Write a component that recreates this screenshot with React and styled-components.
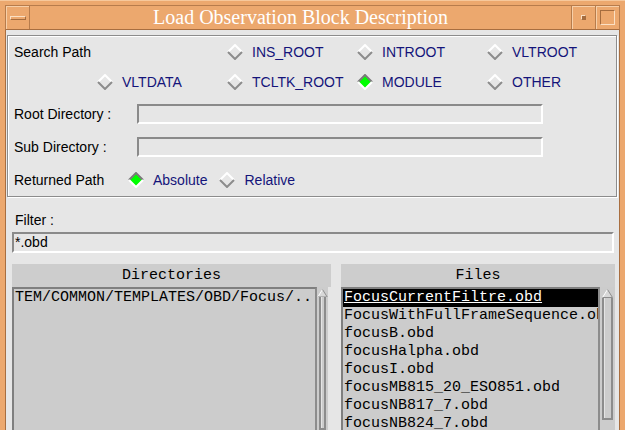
import React from 'react';
import styled, { createGlobalStyle } from 'styled-components';

const GlobalStyle = createGlobalStyle`
  html, body {
    margin: 0;
    padding: 0;
    background: #eca86e;
  }
  body {
    font-family: "Liberation Sans", Arial, sans-serif;
  }
`;

const searchRow1 = ['INS_ROOT', 'INTROOT', 'VLTROOT'];
const searchRow2 = ['VLTDATA', 'TCLTK_ROOT', 'MODULE', 'OTHER'];

const files = [
  'FocusCurrentFiltre.obd',
  'FocusWithFullFrameSequence.obd',
  'focusB.obd',
  'focusHalpha.obd',
  'focusI.obd',
  'focusMB815_20_ESO851.obd',
  'focusNB817_7.obd',
  'focusNB824_7.obd',
  'focusR.obd',
];

const Diamond = ({ checked }) => (
  <svg width="16" height="16" viewBox="0 0 16 16">
    {checked && <polygon points="8,1.5 14.5,8 8,14.5 1.5,8" fill="#00ff00" />}
    <polyline
      points="1,8 8,1 15,8"
      fill="none"
      stroke={checked ? '#7a7a7a' : '#ffffff'}
      strokeWidth="2"
    />
    <polyline
      points="1,8 8,15 15,8"
      fill="none"
      stroke={checked ? '#ffffff' : '#8c8c8c'}
      strokeWidth="2"
    />
  </svg>
);

const Radio = ({ label, checked }) => (
  <RadioItem>
    <Diamond checked={checked} />
    <span>{label}</span>
  </RadioItem>
);

const ScrollBar = ({ width, sliderEnd }) => (
  <Trough $width={width}>
    <svg width="11" height="9" viewBox="0 0 11 9">
      <polygon points="5.5,0.5 10.5,8.5 0.5,8.5" fill="#d8d8d8" />
      <polyline points="0.5,8.5 5.5,0.5" stroke="#ffffff" fill="none" />
      <polyline points="5.5,0.5 10.5,8.5 0.5,8.5" stroke="#8c8c8c" fill="none" />
    </svg>
    <Slider $end={sliderEnd} />
  </Trough>
);

const App = () => {
  return (
    <>
      <GlobalStyle />
      <Frame>
        <TitleBar>
          <TitleButton $w={23}>
            <MinGlyph />
          </TitleButton>
          <Title>Load Observation Block Description</Title>
          <TitleButton $w={23} $sep>
            <DotGlyph />
          </TitleButton>
          <TitleButton $w={23} $sep>
            <MaxGlyph />
          </TitleButton>
        </TitleBar>
        <Content>
          <GroupBox>
            <SearchGrid>
              <GridLabel>Search Path</GridLabel>
              {searchRow1.map((s) => (
                <Radio key={s} label={s} />
              ))}
              {searchRow2.map((s) => (
                <Radio key={s} label={s} checked={s === 'MODULE'} />
              ))}
            </SearchGrid>
            <FieldRow $h={33}>
              <FieldLabel $w={123}>Root Directory :</FieldLabel>
              <Entry $w={406} $h={20} />
            </FieldRow>
            <FieldRow $h={34}>
              <FieldLabel $w={123}>Sub Directory :</FieldLabel>
              <Entry $w={406} $h={20} />
            </FieldRow>
            <FieldRow $h={32}>
              <FieldLabel $w={114}>Returned Path</FieldLabel>
              <Radio label="Absolute" checked />
              <RadioGap />
              <Radio label="Relative" />
            </FieldRow>
          </GroupBox>

          <FilterLabel>Filter :</FilterLabel>
          <FilterEntry $h={21}>*.obd</FilterEntry>

          <Panels>
            <Panel $w={319}>
              <PanelHeader>Directories</PanelHeader>
              <PanelBody $gap={3}>
                <ListBox>
                  <ListItem>TEM/COMMON/TEMPLATES/OBD/Focus/..</ListItem>
                </ListBox>
                <ScrollBar width={11} />
              </PanelBody>
            </Panel>
            <Panel $w={274}>
              <PanelHeader>Files</PanelHeader>
              <PanelBody $gap={0}>
                <ListBox>
                  {files.map((f, i) => (
                    <ListItem key={f} $selected={i === 0}>
                      {f}
                    </ListItem>
                  ))}
                </ListBox>
                <ScrollBar width={15} sliderEnd={122} />
              </PanelBody>
            </Panel>
          </Panels>
        </Content>
      </Frame>
    </>
  );
};

const Frame = styled.div`
  width: 625px;
  height: 430px;
  box-sizing: border-box;
  padding: 5px 5px 0 5px;
  background: #eca86e;
  display: flex;
  flex-direction: column;
  overflow: hidden;
  box-shadow: inset 0 1px 0 #f6c89c;
`;

const TitleBar = styled.div`
  height: 23px;
  display: flex;
  border: 1px solid #b77c4c;
  border-bottom: 1px solid #a86e40;
  box-sizing: content-box;
`;

const TitleButton = styled.div`
  width: ${(p) => p.$w}px;
  display: flex;
  align-items: center;
  justify-content: center;
  border-left: ${(p) => (p.$sep ? '1px solid #b77c4c' : 'none')};
  border-right: ${(p) => (p.$sep ? 'none' : '1px solid #b77c4c')};
  box-shadow: inset 1px 1px 0 #f7cfa8;
`;

const MinGlyph = styled.div`
  width: 14px;
  height: 2px;
  border: 1px solid #a56c3e;
  border-top-color: #fbe0c4;
  border-left-color: #fbe0c4;
  box-sizing: content-box;
`;

const DotGlyph = styled.div`
  width: 3px;
  height: 3px;
  background: #a56c3e;
  border: 1px solid #fbe0c4;
  border-right-color: #a56c3e;
  border-bottom-color: #a56c3e;
`;

const MaxGlyph = styled.div`
  width: 13px;
  height: 13px;
  border: 1px solid #a56c3e;
  border-right-color: #fbe0c4;
  border-bottom-color: #fbe0c4;
`;

const Title = styled.div`
  flex: 1;
  text-align: center;
  color: #ffffff;
  font-family: "Liberation Serif", "Times New Roman", serif;
  font-size: 20px;
  line-height: 23px;
  white-space: nowrap;
`;

const Content = styled.div`
  flex: 1;
  background: #e6e6e6;
  border-left: 1px solid #a86e40;
  border-right: 1px solid #a86e40;
  padding: 5px 2px 0 1px;
  display: flex;
  flex-direction: column;
  min-height: 0;
`;

const GroupBox = styled.div`
  border: 1px solid #8c8c8c;
  box-shadow: inset 1px 1px 0 #ffffff, 1px 1px 0 #ffffff;
  padding: 1px 0 0 6px;
`;

const SearchGrid = styled.div`
  display: grid;
  grid-template-columns: 83px 130px 130px 130px 1fr;
  grid-auto-rows: 30px;
  align-items: center;

  & > :nth-child(2) {
    grid-column: 3;
  }
  & > :nth-child(5) {
    grid-column: 2;
  }
`;

const GridLabel = styled.div`
  grid-column: 1 / span 2;
  font-size: 14px;
  color: #000;
`;

const RadioItem = styled.div`
  display: inline-flex;
  align-items: center;
  gap: 9px;
  font-size: 14px;
  color: #14147a;
  white-space: nowrap;
`;

const RadioGap = styled.div`
  width: 12px;
`;

const FieldRow = styled.div`
  height: ${(p) => p.$h}px;
  display: flex;
  align-items: center;
`;

const FieldLabel = styled.div`
  width: ${(p) => p.$w}px;
  font-size: 14px;
  color: #000;
  white-space: nowrap;
`;

const Entry = styled.div`
  width: ${(p) => (p.$w ? `${p.$w}px` : 'auto')};
  height: ${(p) => p.$h}px;
  box-sizing: border-box;
  border: 2px solid;
  border-color: #8a8a8a #ffffff #ffffff #8a8a8a;
  background: #e6e6e6;
`;

const FilterLabel = styled.div`
  margin-top: 14px;
  padding-left: 8px;
  font-size: 14px;
  line-height: 18px;
  color: #000;
`;

const FilterEntry = styled(Entry)`
  margin: 3px 3px 0 5px;
  font-size: 14px;
  line-height: 17px;
  padding-left: 1px;
  color: #000;
`;

const Panels = styled.div`
  display: flex;
  gap: 10px;
  margin-top: 11px;
  padding-left: 5px;
  flex: 1;
  min-height: 0;
`;

const Panel = styled.div`
  width: ${(p) => p.$w}px;
  display: flex;
  flex-direction: column;
`;

const PanelHeader = styled.div`
  height: 23px;
  line-height: 23px;
  background: #cdcdcd;
  text-align: center;
  font-family: "Liberation Mono", "DejaVu Sans Mono", monospace;
  font-size: 15px;
  color: #000;
`;

const PanelBody = styled.div`
  flex: 1;
  display: flex;
  padding-right: ${(p) => p.$gap}px;
  min-height: 0;
`;

const ListBox = styled.div`
  flex: 1;
  min-width: 0;
  background: #cccccc;
  border-left: 2px solid #7f7f7f;
  border-top: 2px solid #7f7f7f;
  border-right: 2px solid #8c8c8c;
  overflow: hidden;
  font-family: "Liberation Mono", "DejaVu Sans Mono", monospace;
  font-size: 15px;
`;

const ListItem = styled.div`
  height: 18px;
  line-height: 18px;
  padding-left: 1px;
  white-space: nowrap;
  background: ${(p) => (p.$selected ? '#000000' : 'transparent')};
  color: ${(p) => (p.$selected ? '#ffffff' : '#000000')};
  text-decoration: ${(p) => (p.$selected ? 'underline' : 'none')};
`;

const Trough = styled.div`
  width: ${(p) => p.$width}px;
  background: #cccccc;
  display: flex;
  flex-direction: column;
  align-items: center;
  padding-top: 2px;
  box-sizing: border-box;
`;

const Slider = styled.div`
  width: calc(100% - 4px);
  box-sizing: border-box;
  height: ${(p) => (p.$end ? `${p.$end}px` : '100%')};
  border: 2px solid #8c8c8c;
  border-top: none;
  box-shadow: inset 1px 0 0 #e4e4e4;
`;

export default App;
